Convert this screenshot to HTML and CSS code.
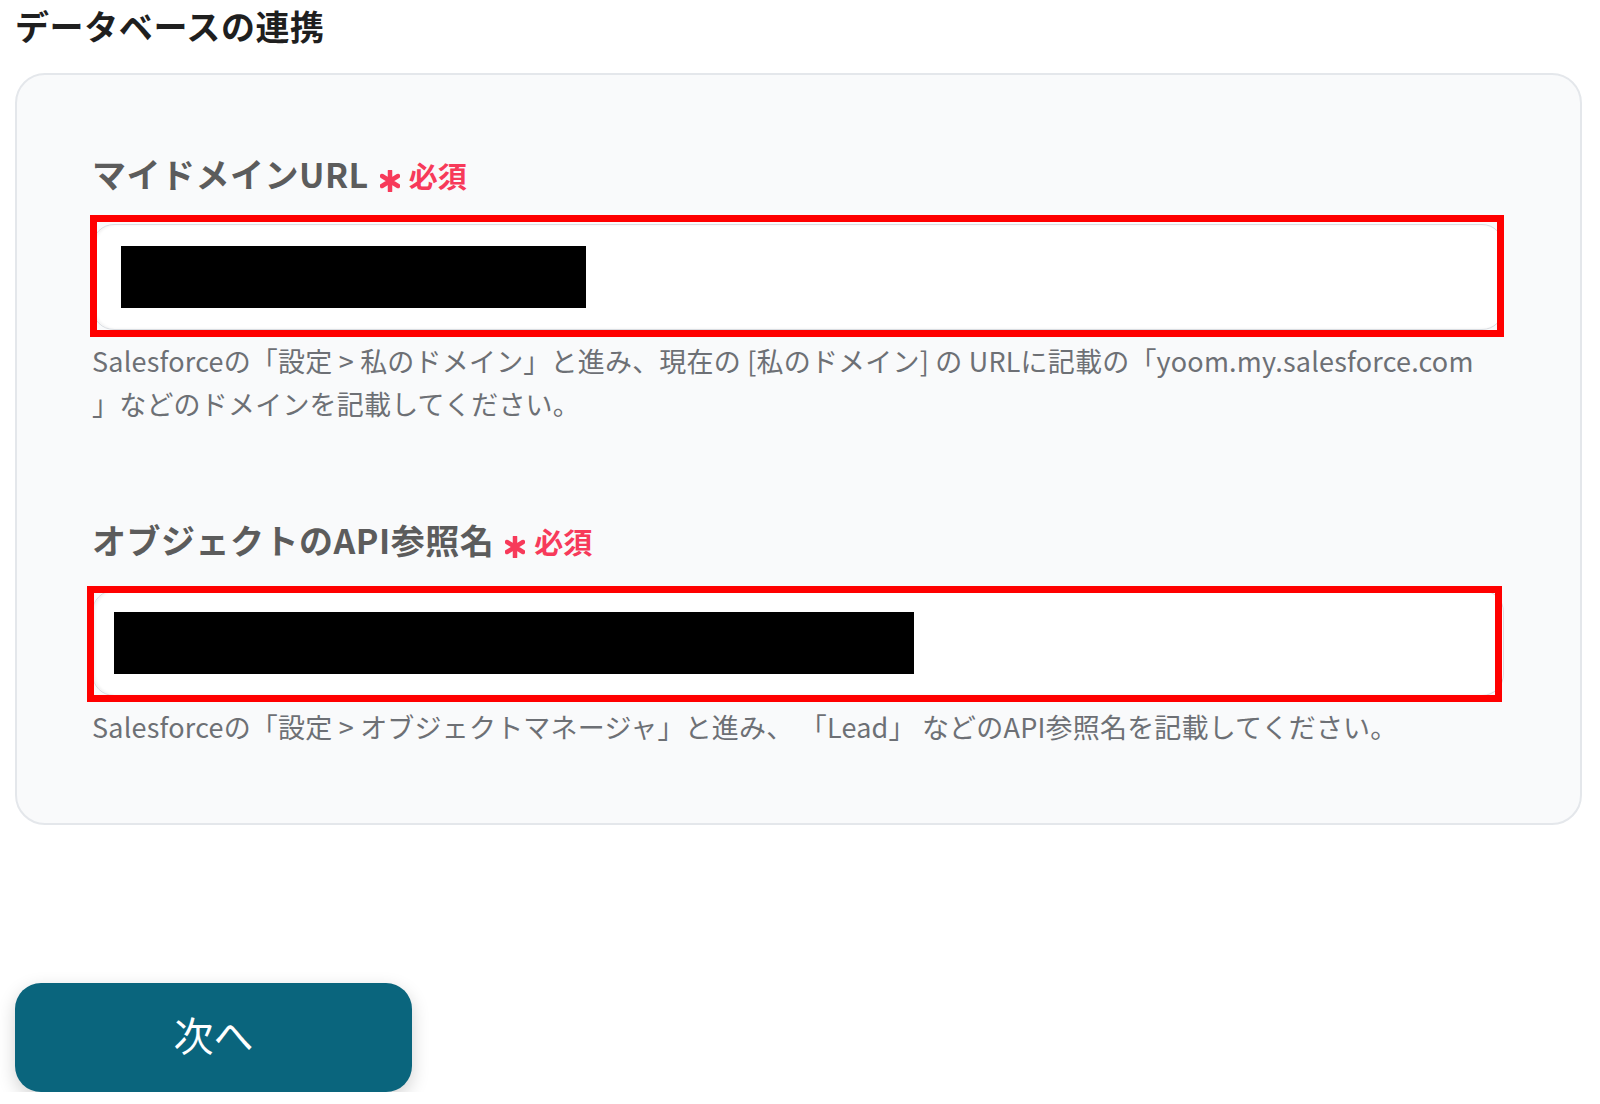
FILE: index.html
```html
<!DOCTYPE html>
<html lang="ja">

<head>
  <meta charset="utf-8">
  <title>データベースの連携</title>
  <link rel="stylesheet" href="styles.css">
</head>

<body>
  <div class="page">
    <p class="title">データベースの連携</p>

    <div class="card">
      <div class="field">
        <p class="label">マイドメインURL<svg class="star" viewBox="0 0 20 22"><path d="M10 1v20M2 6l16 10M18 6L2 16" /></svg><span class="required">必須</span></p>
        <div class="input-wrap">
          <div class="input"><div class="redact redact-1"></div></div>
          <div class="mark mark-1"></div>
        </div>
        <p class="help">Salesforceの「設定 &gt; 私のドメイン」と進み、現在の [私のドメイン] の URLに記載の「yoom.my.salesforce.com<br>」などのドメインを記載してください。</p>
      </div>

      <div class="field">
        <p class="label">オブジェクトのAPI参照名<svg class="star" viewBox="0 0 20 22"><path d="M10 1v20M2 6l16 10M18 6L2 16" /></svg><span class="required">必須</span></p>
        <div class="input-wrap">
          <div class="input"><div class="redact redact-2"></div></div>
          <div class="mark mark-2"></div>
        </div>
        <p class="help">Salesforceの「設定 &gt; オブジェクトマネージャ」と進み、 「Lead」 などのAPI参照名を記載してください。</p>
      </div>
    </div>

    <button class="next-btn">次へ</button>
  </div>
</body>

</html>
```

FILE: styles.css
```css
body{
    margin: 0;
    background-color: white;
    font-family: "Noto Sans CJK JP", "Noto Sans", sans-serif;
}
.page{
    padding: 0 18px 0 15px;
}
.title{
    margin: 0;
    font-size: 34px;
    line-height: 51px;
    font-weight: bold;
    letter-spacing: 0.6px;
    color: #1f1f1f;
}
.card{
    margin-top: 22px;
    background-color: #f9fafb;
    border: 2px solid #e4e7eb;
    border-radius: 30px;
    padding: 73px 76px 75px 75px;
}
.field + .field{
    margin-top: 89px;
}
.label{
    margin: 0 0 23px 0;
    font-size: 34px;
    line-height: 51px;
    font-weight: bold;
    letter-spacing: 0.5px;
    color: #5c5c5c;
    display: flex;
    align-items: baseline;
}
.star{
    width: 20px;
    height: 22px;
    margin: 0 9px 0 11px;
    align-self: center;
    position: relative;
    top: 6px;
    stroke: #f73a5a;
    stroke-width: 4.5;
    stroke-linecap: round;
    fill: none;
}
.required{
    font-size: 29px;
    letter-spacing: 0;
    color: #f73a5a;
}
.input-wrap{
    position: relative;
}
.input{
    height: 106px;
    background-color: white;
    border: 1px solid #d9dde2;
    border-radius: 22px;
    box-sizing: border-box;
    box-shadow: inset 2px 0 3px rgba(0, 0, 0, 0.06);
    display: flex;
    align-items: center;
}
.redact{
    background-color: black;
    height: 62px;
}
.redact-1{
    width: 465px;
    margin-left: 28px;
}
.redact-2{
    width: 800px;
    margin-left: 21px;
}
.mark{
    position: absolute;
    border: 7px solid #ff0000;
}
.mark-1{
    top: -9px;
    bottom: -7px;
    left: -2px;
    right: 0;
}
.mark-2{
    top: -4px;
    bottom: -6px;
    left: -5px;
    right: 2px;
}
.help{
    margin: 9px 0 0 0;
    font-size: 27px;
    line-height: 43px;
    letter-spacing: 0.2px;
    color: #6d7075;
}
.next-btn{
    margin-top: 158px;
    width: 397px;
    height: 109px;
    border: none;
    border-radius: 26px;
    background-color: #0a657d;
    color: white;
    font-family: "Noto Sans CJK JP", sans-serif;
    font-size: 40px;
    line-height: 1;
    padding: 0 0 8px 0;
    box-shadow: 0 6px 18px rgba(0, 0, 0, 0.18);
    cursor: pointer;
}
```
